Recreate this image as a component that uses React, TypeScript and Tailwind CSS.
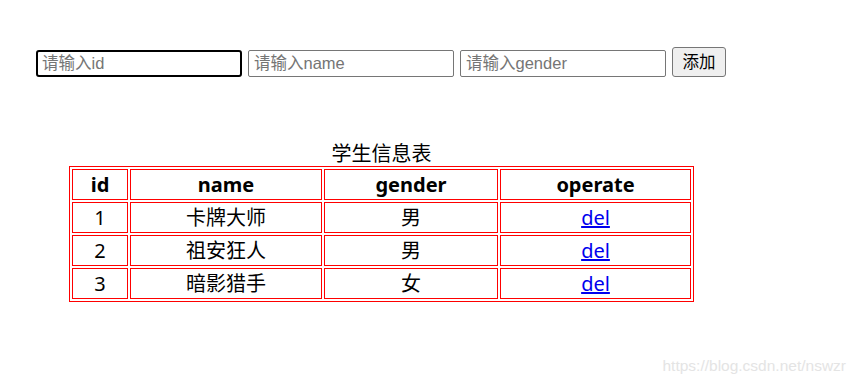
import React from 'react';

const students = [
  { id: 1, name: '卡牌大师', gender: '男' },
  { id: 2, name: '祖安狂人', gender: '男' },
  { id: 3, name: '暗影猎手', gender: '女' },
];

const cell = 'border border-[#ff0000] p-0 h-[31px] text-center align-middle';
const inputFont = { fontFamily: '"Liberation Sans", "Noto Sans CJK SC", sans-serif' };

const App: React.FC = () => {
  return (
    <div
      className="relative w-[859px] h-[384px] bg-white text-black overflow-hidden"
      style={{ fontFamily: '"Noto Sans", "Noto Sans CJK SC", sans-serif' }}
    >
      <div className="flex items-start gap-[6px] pl-[36px] pt-[47px]">
        <input
          placeholder="请输入id"
          className="mt-[3px] w-[206px] h-[27px] border-2 border-black rounded-[3px] px-[4px] text-[16.5px] placeholder:text-[#757575] outline-none"
          style={inputFont}
        />
        <input
          placeholder="请输入name"
          className="mt-[3px] w-[206px] h-[27px] border border-[#767676] rounded-[2px] px-[5px] text-[16.5px] placeholder:text-[#757575] outline-none"
          style={inputFont}
        />
        <input
          placeholder="请输入gender"
          className="mt-[3px] w-[206px] h-[27px] border border-[#767676] rounded-[2px] px-[5px] text-[16.5px] placeholder:text-[#757575] outline-none"
          style={inputFont}
        />
        <button
          className="w-[54px] h-[30px] border border-[#767676] rounded-[3px] bg-[#efefef] text-[16.5px] text-black"
          style={inputFont}
        >
          添加
        </button>
      </div>

      <div className="pl-[69px] pt-[65px]">
        <table className="border border-[#ff0000] border-separate border-spacing-[2px] text-[20px] leading-none">
          <caption className="text-[20px] leading-[24px]">学生信息表</caption>
          <thead>
            <tr>
              <th className={`${cell} w-[56px] font-bold`}>id</th>
              <th className={`${cell} w-[192px] font-bold`}>name</th>
              <th className={`${cell} w-[174px] font-bold`}>gender</th>
              <th className={`${cell} w-[191px] font-bold`}>operate</th>
            </tr>
          </thead>
          <tbody>
            {students.map((s) => (
              <tr key={s.id}>
                <td className={cell}>{s.id}</td>
                <td className={cell}>{s.name}</td>
                <td className={cell}>{s.gender}</td>
                <td className={cell}>
                  <a href="#" className="text-[#0000ee] underline">
                    del
                  </a>
                </td>
              </tr>
            ))}
          </tbody>
        </table>
      </div>

      <div
        className="absolute right-[13px] bottom-[7px] text-[15.5px] text-[#e4e4e4]"
        style={{ fontFamily: '"Liberation Sans", sans-serif' }}
      >
        https://blog.csdn.net/nswzr
      </div>
    </div>
  );
};

export default App;
